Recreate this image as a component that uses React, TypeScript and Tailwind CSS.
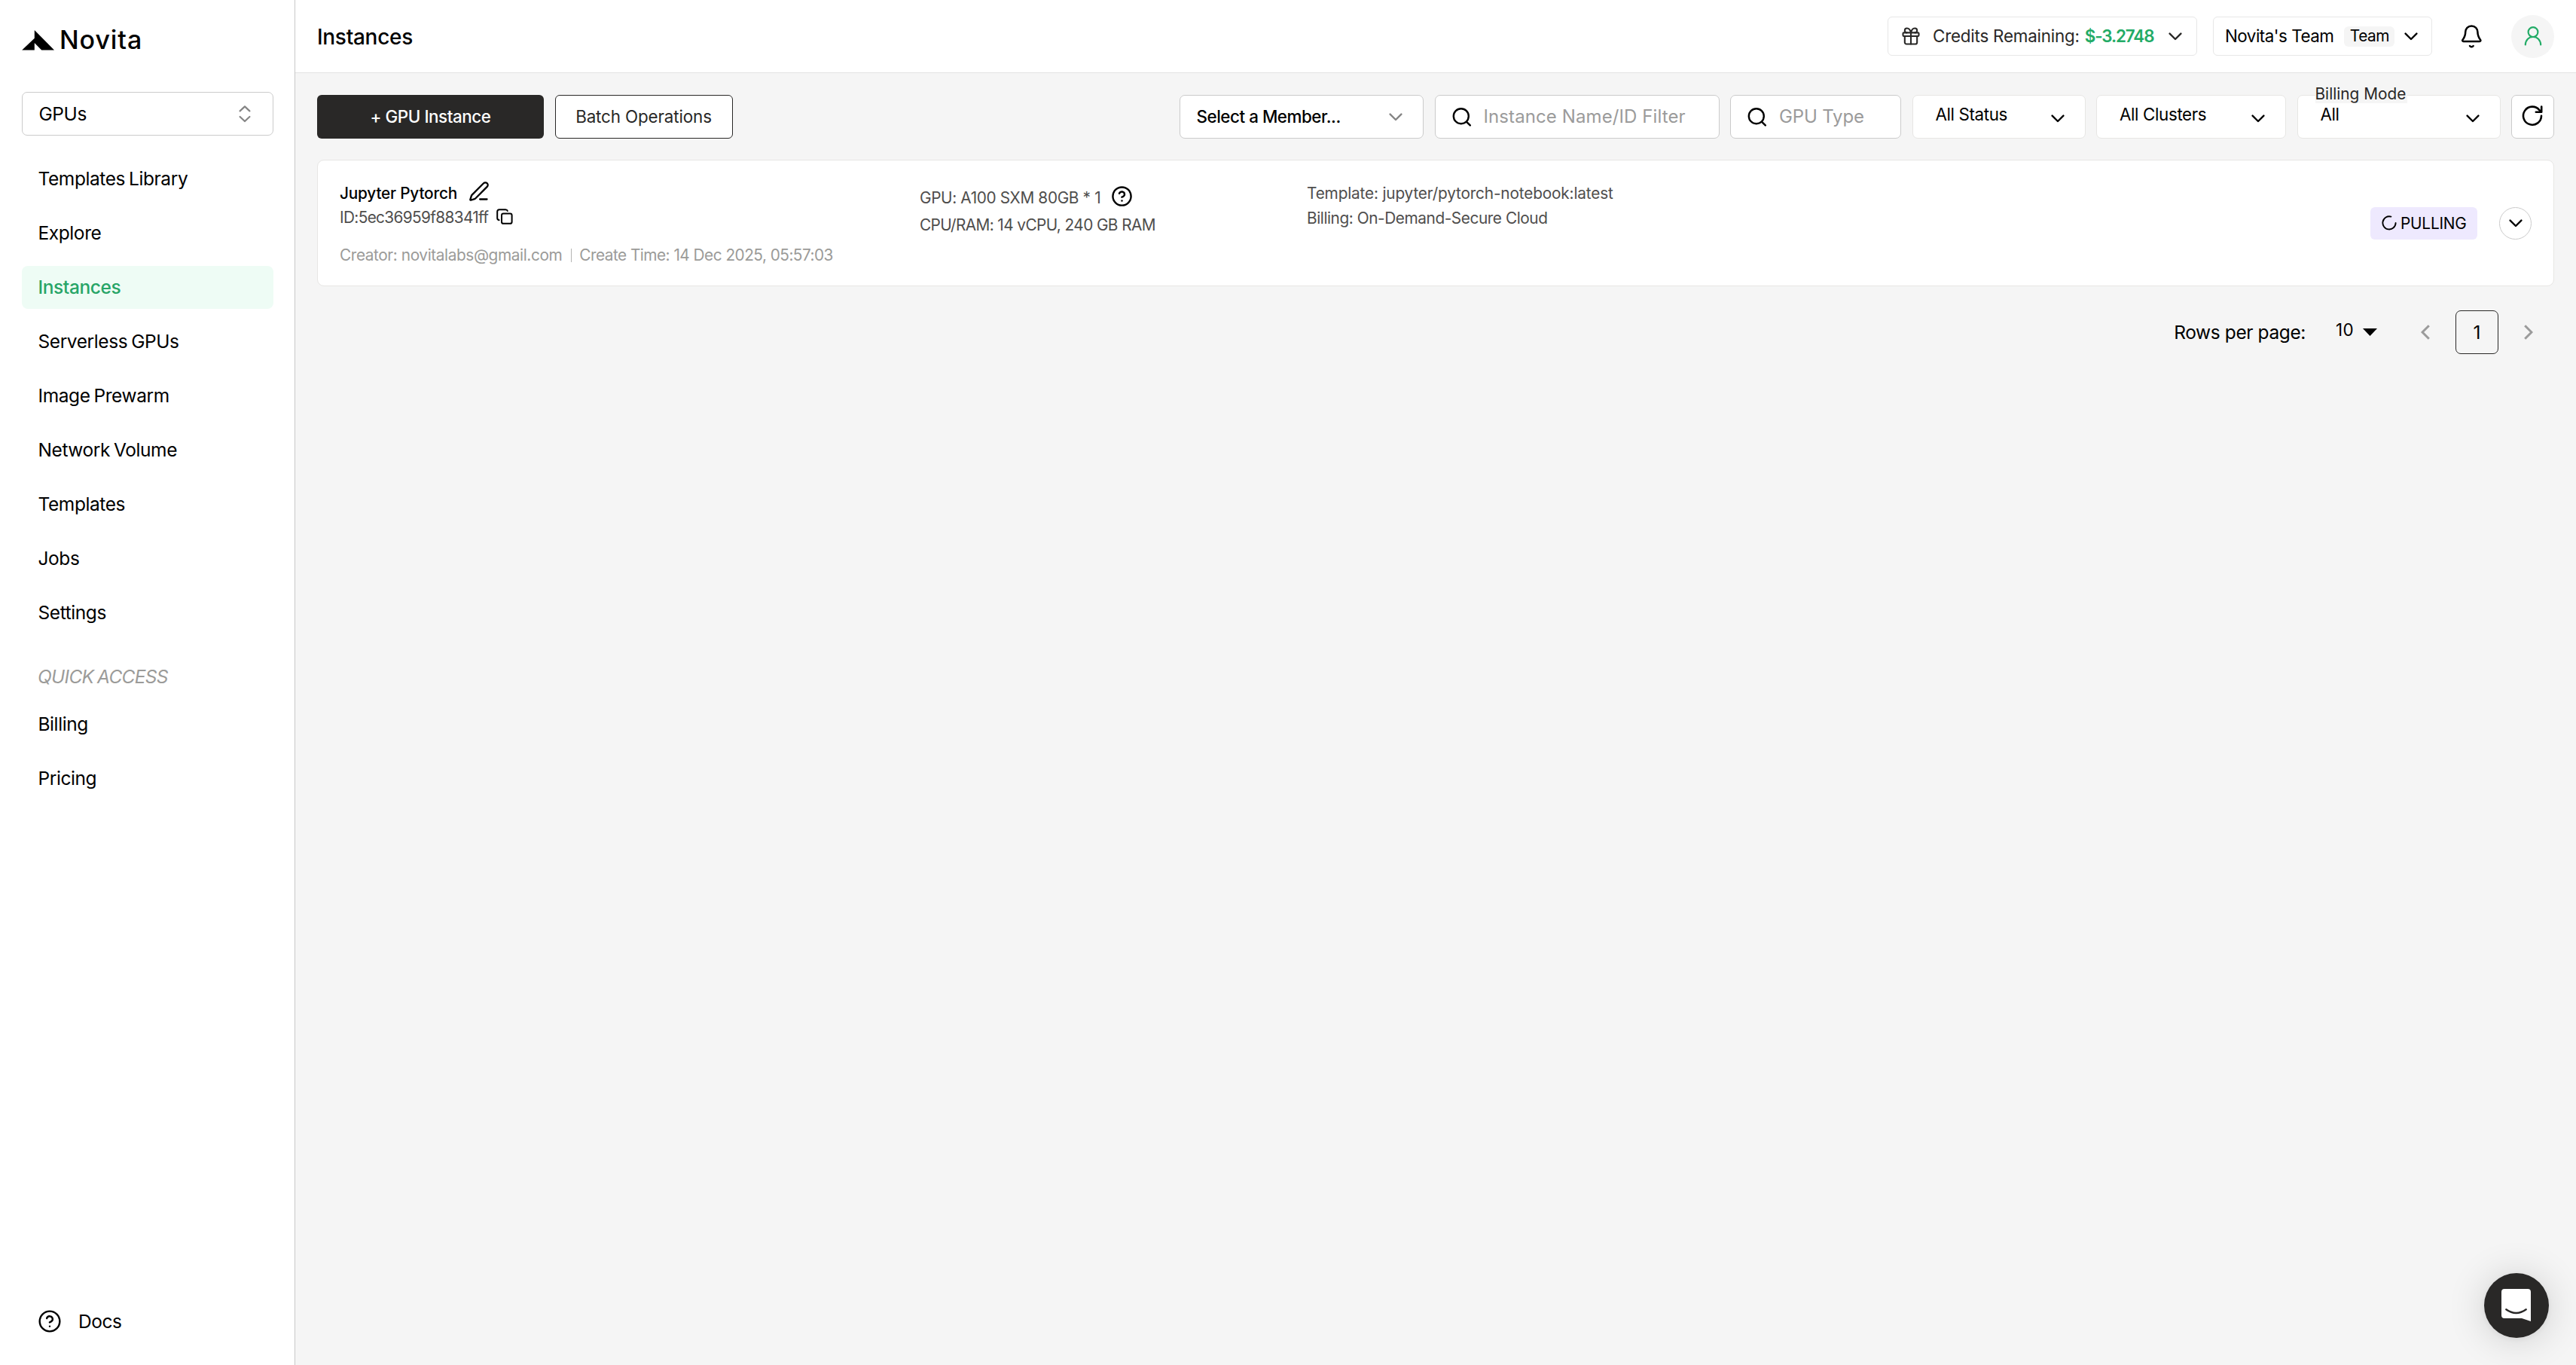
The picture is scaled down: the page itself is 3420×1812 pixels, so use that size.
import type { ReactNode } from 'react';
import { CircleHelp, Gift, PenLine } from 'lucide-react';

const navItems = [
  'Templates Library',
  'Explore',
  'Instances',
  'Serverless GPUs',
  'Image Prewarm',
  'Network Volume',
  'Templates',
  'Jobs',
  'Settings',
];

const quickAccess = ['Billing', 'Pricing'];

function ChevronDown({ className = '' }: { className?: string }) {
  return (
    <svg
      width="18"
      height="11"
      viewBox="0 0 18 11"
      fill="none"
      stroke="currentColor"
      strokeWidth="2.4"
      strokeLinecap="round"
      strokeLinejoin="round"
      className={`shrink-0 ${className}`}
    >
      <path d="M1.6 1.6 9 9l7.4-7.4" />
    </svg>
  );
}

function SearchIcon() {
  return (
    <svg
      width="26"
      height="26"
      viewBox="0 0 26 26"
      fill="none"
      stroke="currentColor"
      strokeWidth="2.4"
      strokeLinecap="round"
      className="shrink-0"
    >
      <circle cx="11.8" cy="12.2" r="10" />
      <path d="m19.2 19.8 4.6 4.6" />
    </svg>
  );
}

function Logo() {
  return (
    <div className="flex h-[26px] items-center">
      <svg width="43" height="27" viewBox="0 0 43 27" className="shrink-0">
        <path d="M16.8 0 43 26.6H26.2L16.8 17v9.6H.2L16.8 10.8z" />
      </svg>
      <span className="ml-[7px] text-[34px] leading-none font-medium tracking-[0.9px]">Novita</span>
    </div>
  );
}

function NavItem({ label, active }: { label: string; active?: boolean }) {
  return (
    <a
      className={`flex h-[57px] items-center rounded-[8px] pl-[21.5px] ${
        active ? 'bg-[#eefcf5] font-medium text-[#27a567]' : ''
      }`}
    >
      {label}
    </a>
  );
}

function Sidebar() {
  return (
    <aside className="flex w-[392px] shrink-0 flex-col border-r border-[#c8c8c8] bg-white pt-10 pr-[28px] pb-[29px] pl-[29px] text-[24.5px] tracking-[-0.42px] [word-spacing:-1.5px]">
      <Logo />
      <div className="mt-14 flex h-[58px] shrink-0 items-center justify-between rounded-[7px] border border-[#cbcbcb] pr-[29px] pl-[21.5px]">
        GPUs
        <svg
          width="16"
          height="24"
          viewBox="0 0 16 24"
          fill="none"
          stroke="#858585"
          strokeWidth="2.2"
          strokeLinecap="round"
          strokeLinejoin="round"
        >
          <path d="m1.6 8.4 6.4-6 6.4 6M1.6 16l6.4 6 6.4-6" />
        </svg>
      </div>
      <nav className="mt-[29px] flex flex-col gap-[15px]">
        {navItems.map((label) => (
          <NavItem key={label} label={label} active={label === 'Instances'} />
        ))}
      </nav>
      <div className="flex h-[91px] items-center pt-[21px] pl-[21px] tracking-[-0.7px] text-[#9b9b99] italic">
        QUICK ACCESS
      </div>
      <nav className="flex flex-col gap-[15px]">
        {quickAccess.map((label) => (
          <NavItem key={label} label={label} />
        ))}
      </nav>
      <a className="mt-auto flex h-[58px] items-center pl-[21px]">
        <CircleHelp size={32} strokeWidth={1.8} />
        <span className="ml-[22px]">Docs</span>
      </a>
    </aside>
  );
}

function Header() {
  return (
    <header className="flex h-[97px] shrink-0 items-center border-b border-[#e4e4e4] bg-white pr-[29px] pl-[29px]">
      <h1 className="flex-1 pt-[2px] text-[28px] font-medium tracking-[-0.3px]">Instances</h1>
      <div className="flex h-[52px] w-[411px] items-center rounded-[6px] border border-[#e7e7e7] pl-[16px] text-[22.4px] text-[#292827]">
        <Gift size={28} strokeWidth={1.8} />
        <span className="ml-[15px] tracking-[-0.22px]">Credits Remaining:</span>
        <span className="ml-[7px] font-semibold tracking-[-1.1px] text-[#23ab66]">$-3.2748</span>
        <ChevronDown className="mr-[19px] ml-auto" />
      </div>
      <div className="ml-[21px] flex h-[52px] w-[291px] items-center rounded-[6px] border border-[#e7e7e7] pl-[15px] text-[22.4px]">
        <span className="tracking-[-0.5px]">Novita's Team</span>
        <span className="ml-[14px] flex h-[27px] w-[67px] items-center justify-center rounded-[6px] bg-[#f5f5f5] text-[20.8px] tracking-[-0.5px]">
          Team
        </span>
        <ChevronDown className="mr-[18px] ml-auto" />
      </div>
      <svg
        width="33"
        height="33"
        viewBox="0 0 33 33"
        fill="none"
        stroke="black"
        strokeWidth="2.5"
        strokeLinecap="round"
        strokeLinejoin="round"
        className="ml-[36px]"
      >
        <path d="M16.3 2.4c-4.8 0-8.1 3.6-8.1 8.2 0 5.2-1.4 7.4-3.6 10.2-.8 1-.3 2.2 1 2.2h21.4c1.3 0 1.8-1.2 1-2.2-2.2-2.8-3.6-5-3.6-10.2 0-4.6-3.3-8.2-8.1-8.2z" />
        <path d="M14 29c1.3 1.5 3.3 1.5 4.6 0" />
      </svg>
      <div className="ml-[36px] flex size-[57px] items-center justify-center rounded-full bg-[#f5f5f5]">
        <svg
          width="24"
          height="26"
          viewBox="0 0 24 26"
          fill="none"
          stroke="#22ab66"
          strokeWidth="2.2"
          strokeLinecap="round"
        >
          <circle cx="12" cy="7.6" r="6.4" />
          <path d="M1.8 24.4C2.2 18 6.4 14 12 14s9.8 4 10.2 10.4" />
        </svg>
      </div>
    </header>
  );
}

function SearchInput({ placeholder, className }: { placeholder: string; className: string }) {
  return (
    <div
      className={`flex h-[58px] items-center gap-[16px] rounded-[7px] border border-[#cbcbcb] bg-white pl-[22px] text-[24px] ${className}`}
    >
      <SearchIcon />
      <span className="text-[#9b9b9b]">{placeholder}</span>
    </div>
  );
}

function FilterSelect({ value, className, label }: { value: string; className: string; label?: ReactNode }) {
  return (
    <div
      className={`relative flex h-[58px] items-center justify-between rounded-[7px] border border-[#e7e6e4] bg-white pr-[27px] pl-[30px] text-[22.4px] tracking-[-0.38px] ${className}`}
    >
      {label}
      <span className="pb-[6px]">{value}</span>
      <ChevronDown className="mt-[4px]" />
    </div>
  );
}

function Toolbar() {
  return (
    <div className="flex items-center gap-[14.5px]">
      <button className="h-[58px] w-[301px] rounded-[6px] bg-[#292827] text-[22.4px] font-medium tracking-[-0.43px] text-white">
        + GPU Instance
      </button>
      <button className="h-[58px] w-[236px] rounded-[6px] border border-[#292827] bg-white text-[22.4px] tracking-[-0.13px] text-[#292827]">
        Batch Operations
      </button>
      <div className="ml-auto flex h-[58px] w-[324px] items-center justify-between rounded-[7px] border border-[#cbcbcb] bg-white pr-[27px] pl-[21.5px] text-[22.4px] font-medium tracking-[-0.47px]">
        Select a Member...
        <ChevronDown className="text-[#858585]" />
      </div>
      <SearchInput placeholder="Instance Name/ID Filter" className="w-[378px] tracking-[0.1px]" />
      <SearchInput placeholder="GPU Type" className="w-[227px] tracking-[-0.15px]" />
      <FilterSelect value="All Status" className="w-[230px]" />
      <FilterSelect value="All Clusters" className="w-[252px]" />
      <FilterSelect
        value="All"
        className="w-[270px]"
        label={
          <span className="absolute -top-[14px] left-[23px] bg-[#f5f5f5] pr-[2px] text-[20.8px] leading-[24px] tracking-normal text-[#292827]">
            Billing Mode
          </span>
        }
      />
      <button className="flex h-[58px] w-[57px] items-center justify-center rounded-[7px] border border-[#cbcbcb] bg-white">
        <svg
          width="30"
          height="30"
          viewBox="0 0 30 30"
          fill="none"
          stroke="black"
          strokeWidth="2.6"
          strokeLinecap="round"
          strokeLinejoin="round"
          className="-mt-[2px] -ml-[2px]"
        >
          <path d="M27 14.7A12 12 0 1 1 24.4 7.2l2.2 2.4" />
          <path d="M27.2 2.6v7.2h-7.4" />
        </svg>
      </button>
    </div>
  );
}

function InstanceCard() {
  return (
    <article className="flex h-[168px] rounded-[9px] border border-[#e7e6e4] bg-white pr-[29px] pl-[29px] text-[20.8px] leading-[32px] text-[#4f4e4d]">
      <div className="w-[770px] pt-[28px]">
        <div className="flex items-center text-black">
          <span className="font-medium tracking-[-0.21px]">Jupyter Pytorch</span>
          <PenLine size={28} strokeWidth={2} className="-mt-[6px] ml-[15px]" />
        </div>
        <div className="flex items-center">
          <span className="tracking-[-0.65px]">ID:5ec36959f88341ff</span>
          <svg
            width="22"
            height="21"
            viewBox="0 0 22 21"
            fill="none"
            stroke="black"
            strokeWidth="2"
            strokeLinecap="round"
            className="-mt-[3px] ml-[11px]"
          >
            <rect x="7" y="6.4" width="13.6" height="13.4" rx="2.4" />
            <path d="M3.6 15.2C2 15 1.2 14 1.2 12.6V4c0-1.8 1-2.8 2.8-2.8h8.2c1.5 0 2.3.6 2.6 1.8" />
          </svg>
        </div>
        <div className="mt-[18px] flex items-center text-[#9b9b99]">
          <span className="tracking-[-0.4px]">Creator: novitalabs@gmail.com</span>
          <span className="mr-[10px] ml-[12px] h-[18px] w-px bg-[#b5b5b3]" />
          <span className="tracking-[-0.52px]">Create Time: 14 Dec 2025, 05:57:03</span>
        </div>
      </div>
      <div className="w-[514px] pt-[32px] leading-[36px]">
        <div className="flex items-center">
          <span className="tracking-[-0.35px]">GPU: A100 SXM 80GB * 1</span>
          <CircleHelp size={29} strokeWidth={2} className="-mt-[6px] ml-[14px] text-black" />
        </div>
        <div className="tracking-[-0.59px]">CPU/RAM: 14 vCPU, 240 GB RAM</div>
      </div>
      <div className="pt-[27px] leading-[33px]">
        <div className="tracking-[-0.17px]">Template: jupyter/pytorch-notebook:latest</div>
        <div className="tracking-[-0.43px]">Billing: On-Demand-Secure Cloud</div>
      </div>
      <div className="ml-auto flex items-center gap-[29px] text-black">
        <span className="flex h-[43px] w-[142px] items-center rounded-[6px] bg-[#eee9fe] pl-[15px]">
          <svg
            width="20"
            height="20"
            viewBox="0 0 20 20"
            fill="none"
            stroke="black"
            strokeWidth="1.9"
            strokeLinecap="round"
          >
            <path d="M12.4 1.6A8.6 8.6 0 1 0 18.6 10" />
          </svg>
          <span className="ml-[5px] pt-[2px] tracking-[-0.2px]">PULLING</span>
        </span>
        <button className="flex size-[43px] items-center justify-center rounded-full border border-[#cbcbcb]">
          <ChevronDown />
        </button>
      </div>
    </article>
  );
}

function Pagination() {
  return (
    <div className="flex h-[58px] items-center justify-end pr-[28px]">
      <span className="text-[24.5px] tracking-[-0.4px]">Rows per page:</span>
      <span className="ml-[40px] pb-[7px] text-[22.4px] tracking-[0.4px]">10</span>
      <svg width="19" height="10" viewBox="0 0 19 10" className="ml-[12px]">
        <path d="M0 0h19L9.5 10z" />
      </svg>
      <svg
        width="12"
        height="20"
        viewBox="0 0 12 20"
        fill="none"
        stroke="#9b9b9b"
        strokeWidth="3"
        className="ml-[58px]"
      >
        <path d="m10.8 1.2-8.8 8.8 8.8 8.8" />
      </svg>
      <span className="ml-[34px] flex h-[58px] w-[57px] items-center justify-center rounded-[7px] border border-[#292827] text-[24.5px]">
        1
      </span>
      <svg
        width="12"
        height="20"
        viewBox="0 0 12 20"
        fill="none"
        stroke="#9b9b9b"
        strokeWidth="3"
        className="ml-[34px]"
      >
        <path d="m1.2 1.2 8.8 8.8-8.8 8.8" />
      </svg>
    </div>
  );
}

function ChatLauncher() {
  return (
    <button className="fixed right-[36px] bottom-[36px] flex size-[86px] items-center justify-center rounded-full bg-[#292827] shadow-[0_2px_10px_rgba(0,0,0,0.06),0_3px_51px_rgba(0,0,0,0.16)]">
      <svg width="39" height="43" viewBox="0 0 39 43" className="-mt-px -ml-px">
        <path fill="white" d="M4 0h31a4 4 0 0 1 4 4v39l-12-4H4a4 4 0 0 1-4-4V4a4 4 0 0 1 4-4z" />
        <path d="M6.3 27.3q13.2 9.4 26.4 0" fill="none" stroke="#292827" strokeWidth="2.4" strokeLinecap="round" />
      </svg>
    </button>
  );
}

export default function App() {
  return (
    <div className="flex h-screen w-full overflow-hidden bg-[#f5f5f5] font-['Inter','Liberation_Sans',sans-serif] text-black">
      <Sidebar />
      <div className="flex min-w-0 flex-1 flex-col">
        <Header />
        <main className="flex flex-1 flex-col px-[29px] pt-[29px]">
          <Toolbar />
          <div className="mt-[28px]">
            <InstanceCard />
          </div>
          <div className="mt-[32px]">
            <Pagination />
          </div>
        </main>
      </div>
      <ChatLauncher />
    </div>
  );
}
